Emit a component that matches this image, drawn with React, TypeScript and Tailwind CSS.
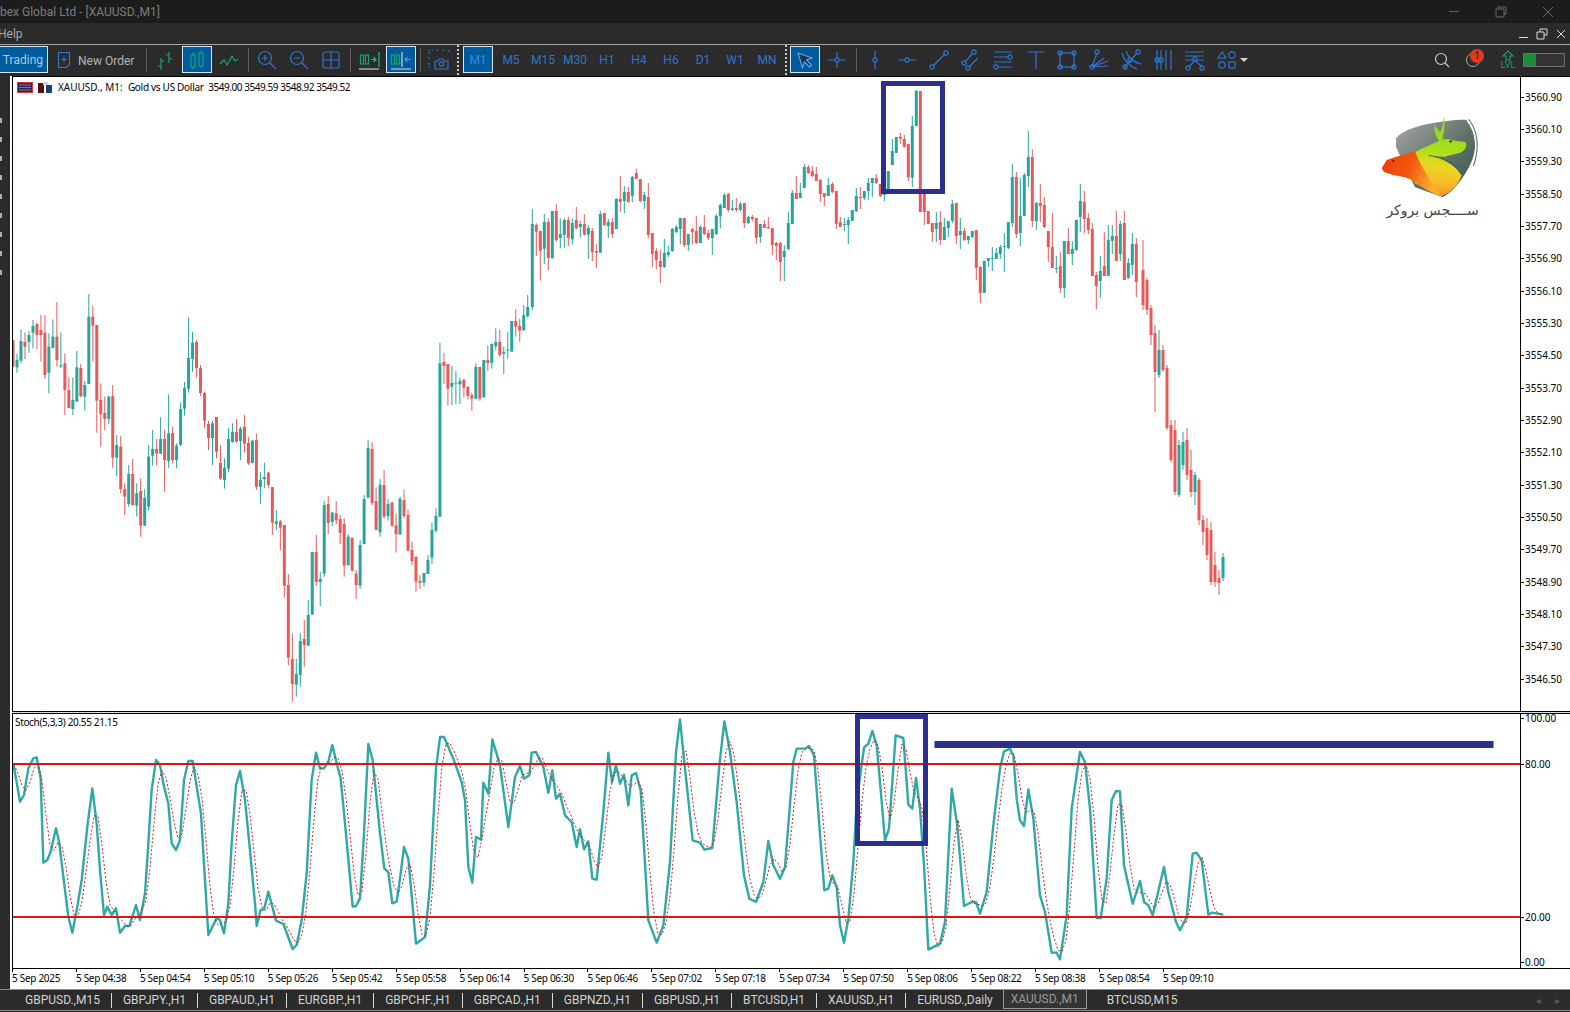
import type { ReactNode } from "react";

type C = [number, number, number, number, number];

// kind (1 green, 0 red), body top, body bottom, wick top, wick bottom
const LEFT: C[] = [
  [0,180,260,180,262],[1,240,262,222,278],[1,183,242,148,250],[0,186,200,157,237],[1,165,186,153,218],[1,138,158,120,205],[0,132,165,128,207],[0,150,165,105,245],
  [0,158,285,105,297],[1,200,278,160,340],[1,170,204,118,205],[0,170,240,66,260],[1,255,259,157,265],[0,250,330,220,405],[0,330,384,292,385],[1,360,387,292,405],
  [1,262,365,213,365],[0,264,349,252,352],[1,315,350,303,392],[1,110,312,42,312],[0,110,137,78,245],[0,135,362,135,458],[0,360,402,310,500],[0,399,417,350,450],
  [1,350,417,348,432],[0,348,533,315,563],[1,495,533,465,590],[0,500,627,468,640],[0,627,650,610,705],[1,582,672,555,680],[0,582,675,537,677],[1,640,677,610,710],
  [0,633,737,595,770],[1,654,737,628,737],[1,530,680,495,692],[1,507,527,450,557],[0,507,521,477,557],[1,477,521,412,522],[0,477,540,450,635],[1,460,543,343,563],
  [0,459,540,440,550],[1,497,540,490,565],[1,387,495,367,498],[1,324,386,306,407],[1,234,326,112,338],[1,188,237,156,275],[0,186,264,180,292],[0,264,339,255,347],
  [0,339,422,335,443],[0,432,474,423,510],[1,430,474,423,555],[0,411,515,411,535],[0,549,596,495,600],[1,564,600,535,626],[1,477,566,445,577],[1,456,486,430,488],
  [0,456,485,417,488],[1,446,483,440,540],[0,441,491,405,518],[0,489,550,470,555],[1,482,549,480,550],[0,480,620,460,630],[1,600,621,575,672],[1,591,597,548,625],
  [0,578,615,575,625],[0,621,728,621,765],[1,724,732,690,750],[0,724,743,720,810],[0,735,917,735,953],[0,915,1133,882,1155],[0,1137,1212,1060,1265],[1,1182,1214,1137,1250],
  [1,1083,1185,1060,1220],[0,1077,1095,1020,1160],[1,1005,1097,960,1097],[1,816,1004,816,1005],[0,816,906,765,918],[1,897,906,875,978],[1,675,881,662,890],[0,672,729,648,762],
  [1,698,726,695,738],[0,700,721,663,733],[0,717,759,705,793],[0,732,857,715,890],[1,770,855,762,857],[0,773,872,773,875],[0,881,915,870,957],[1,795,917,780,927],
  [1,657,792,645,792],[1,504,653,480,655],[0,507,669,487,675],[0,663,750,622,750],[1,615,757,597,770],[0,615,710,570,715],[1,672,708,657,722],[0,668,737,665,740],
  [0,736,762,700,818],[1,656,763,650,765],[0,660,708,628,715],[0,705,812,690,815],[0,810,843,785,855],[0,830,905,830,935],[0,903,909,885,927],[1,879,908,879,920],
  [1,840,882,825,882],[1,750,833,728,852],[1,708,752,685,758],[1,250,710,188,710],[0,246,258,218,312],[0,252,326,252,377],[1,309,320,258,375],[1,308,311,273,372],
  [1,303,313,293,372],[0,299,323,297,352],[0,321,348,318,358],[0,345,356,338,392],[1,261,356,250,358],[0,261,356,261,362],[1,240,352,240,352],[0,240,249,197,272],
  [1,192,249,190,266],[1,186,199,145,210],[0,186,225,150,230],[1,216,221,200,282],[1,208,211,155,236],[1,123,215,123,215],[0,123,140,87,170],[0,138,152,117,186],
  [1,105,151,75,152],[1,81,109,45,112],
];

const MIDDLE: C[] = [
  [1,222,471,177,480],[0,225,245,220,318],[0,243,302,243,392],[1,216,296,192,342],[0,216,324,205,360],[1,183,325,183,325],[0,183,270,162,275],[1,252,264,205,295],
  [1,210,255,205,293],[0,210,264,200,288],[1,219,268,205,283],[0,210,235,171,238],[1,222,231,213,263],[0,222,254,192,257],[1,234,254,225,327],[0,243,306,234,333],
  [0,303,308,283,354],[1,192,308,183,308],[0,189,225,189,228],[1,216,228,207,264],[0,216,252,204,264],[1,147,237,144,237],[0,147,156,78,186],[1,126,153,108,189],
  [0,126,156,111,158],[1,81,138,78,156],[0,69,87,57,87],[0,87,153,87,157],[1,135,153,126,177],[0,141,255,99,264],[0,249,312,249,352],[0,303,330,294,357],
  [0,333,351,300,399],[1,309,351,267,354],[1,306,315,288,321],[1,237,303,234,306],[1,231,246,225,249],[1,204,237,204,282],[0,204,285,204,291],[1,252,285,252,303],
  [0,237,246,234,282],[0,243,279,198,282],[1,231,279,225,279],[0,231,252,195,255],[0,249,264,240,270],[1,237,264,237,315],[1,198,252,192,255],[1,165,199,160,235],
  [1,135,174,129,174],[0,132,180,129,186],[1,175,180,150,183],[0,174,180,144,186],[1,162,180,156,183],[0,159,219,159,234],[1,201,219,198,222],[0,201,207,195,213],
  [0,204,264,204,282],[1,222,261,222,279],[0,222,234,210,234],[0,231,235,201,237],[0,234,285,234,315],[0,279,288,276,331],[0,279,336,276,393],[1,303,321,285,393],
  [1,219,297,186,300],[1,129,222,120,222],[0,129,147,78,147],[1,129,144,99,144],[1,51,114,42,114],[0,51,69,45,72],[0,63,78,48,81],[0,72,93,51,93],
  [0,90,132,87,156],[0,129,141,129,168],[1,105,138,84,138],[0,102,126,96,129],[0,123,222,123,237],[0,216,231,201,231],[1,222,225,204,243],[1,210,225,201,282],
  [1,180,213,180,213],[1,138,184,114,186],[0,141,144,111,177],[1,123,144,123,150],[1,99,123,84,150],[1,84,99,84,141],[0,84,99,72,102],[0,102,138,102,141],
  [1,118,135,115,153],
];

const RIGHT: C[] = [
  [1,303,358,303,358],[1,243,285,207,285],[1,201,249,201,249],[0,200,206,189,222],[0,207,231,195,232],[0,222,322,222,333],[1,168,323,138,351],[1,63,168,60,168],
  [0,63,426,63,426],[0,372,426,372,465],[0,423,462,423,462],[0,459,486,459,516],[1,459,477,426,516],[0,456,510,423,525],[1,471,510,444,510],[1,453,474,453,501],
  [1,402,453,390,459],[0,399,498,399,522],[1,483,495,444,537],[0,483,510,474,513],[1,498,510,498,522],[1,483,501,483,504],[0,480,594,480,630],[0,591,669,588,699],
  [1,573,669,573,669],[1,564,573,564,591],[1,564,567,531,603],[1,549,567,534,567],[1,531,552,525,567],[1,528,531,489,606],[1,456,534,456,537],[1,321,459,282,471],
  [0,321,492,306,504],[1,438,489,324,528],[1,315,438,309,438],[1,261,318,183,351],[0,261,453,237,471],[1,399,453,396,480],[0,399,408,342,456],[0,405,471,381,474],
  [0,483,531,483,576],[0,531,594,429,594],[1,594,597,558,609],[0,588,654,546,669],[1,513,654,513,684],[0,513,552,474,552],[1,537,552,513,585],[1,450,540,450,543],
  [1,393,441,342,486],[0,396,447,363,489],[0,444,480,429,492],[0,477,618,459,618],[0,615,648,606,717],[1,603,633,558,684],[0,588,618,486,618],[1,510,618,465,618],
  [1,498,513,465,552],[0,498,573,423,573],[1,462,552,453,573],[0,459,630,423,630],[1,579,624,564,627],[1,522,585,489,615],[0,522,636,504,681],
];

// last stretch, already in page pixels
const TAIL: C[] = [
  [0,270,305,240,310],[0,280,310,278,315],[0,308,335,305,345],[0,333,372,325,412],[1,350,375,330,378],[0,350,370,345,372],[0,368,428,365,430],[0,425,460,420,462],
  [0,430,492,420,495],[1,445,495,440,497],[1,442,465,432,470],[0,440,475,428,480],[0,470,492,450,497],[1,475,492,472,505],[0,480,520,478,525],[0,520,532,515,545],
  [0,528,555,518,560],[0,530,582,522,585],[0,565,582,552,587],[0,578,583,570,595],[1,557,578,553,581],
];

const candles = [
  ...LEFT.map((c, i) => ({ x: 13 + i * 3.99, y: (v: number) => 280 + v / 3, c })),
  ...MIDDLE.map((c, i) => ({ x: 532.3 + i * 4, y: (v: number) => 150 + v / 3, c })),
  ...RIGHT.map((c, i) => ({ x: 888.3 + i * 4, y: (v: number) => 70 + v / 3, c })),
  ...TAIL.map((c, i) => ({ x: 1143 + i * 4, y: (v: number) => v, c })),
];

const S1 = [40,190,60,305,72,285,85,205,100,175,110,172,122,235,130,488,142,480,152,455,168,385,178,430,190,530,205,650,217,698,232,620,245,540,262,380,277,265,290,370,300,510,312,645,322,620,335,645,348,625,360,698,375,678,388,678,408,615,420,660,435,580,445,430,455,270,468,180,480,195,492,260,505,310,515,430,528,450,540,420,552,240,565,183,578,183,590,260,603,340,610,460,625,705,650,655,660,660,672,700,685,610,695,430,708,255,720,213,735,300,748,430,765,610,770,678,782,630,792,628,805,575,828,662,850,672,878,747,890,735,905,660,920,520,935,240,948,158,960,205,972,205,985,185,997,135,1010,190,1022,235,1035,370,1058,620,1068,618,1080,595,1092,400,1105,132,1118,180,1140,400,1153,505,1165,517,1177,610,1190,605];
const S2 = [0,500,12,405,25,440,48,695,75,675,90,520,108,170,120,75,132,75,160,140,185,210,195,265,205,465,217,512,228,375,243,383,250,212,265,245,277,82,300,160,325,345,345,195,360,162,372,200,388,190,395,122,408,120,430,165,445,242,457,175,468,260,480,245,495,310,515,330,530,405,540,352,552,412,565,388,577,500,590,503,610,300,625,122,636,210,648,160,660,215,672,188,685,280,695,190,708,183,722,235,745,625,770,692,790,640,810,450,828,120,840,22,855,170,878,385,900,392,913,413,937,408,958,160,973,28,990,120,1010,270,1032,490,1048,560,1068,570,1090,510,1105,387,1120,460,1140,500,1155,465,1180,150,1190,110,1215,110,1227,102,1242,130,1258,340,1273,535,1285,530,1297,490,1310,525];
const S3 = [0,640,12,692,25,620,40,450,50,270,72,107,85,95,97,57,110,100,120,210,135,385,147,350,167,70,190,78,205,278,217,290,228,198,240,290,252,460,265,713,300,695,315,630,335,230,352,340,372,582,395,570,408,570,420,605,440,540,460,340,480,170,492,118,510,110,520,130,530,260,540,325,552,342,565,232,580,320,600,550,615,600,635,722,650,722,660,742,680,610,695,290,720,120,735,150,750,290,770,618,782,618,800,500,815,265,828,237,840,238,852,460,878,575,900,507,912,570,925,580,938,610,972,465,985,540,1008,630,1020,655,1040,615,1058,425,1070,422,1085,445,1105,608,1115,602,1150,608];

const pairs = (a: number[], x0: number, y0: number) => {
  const out: [number, number][] = [];
  for (let i = 0; i < a.length; i += 2) out.push([x0 + a[i] / 3, y0 + a[i + 1] / 3]);
  return out;
};

const stoch = [...pairs(S1, 0, 700), ...pairs(S2, 400, 712), ...pairs(S3, 840, 712)];

const stochAt = (x: number) => {
  if (x <= stoch[0][0]) return stoch[0][1];
  for (let i = 1; i < stoch.length; i++) {
    if (x <= stoch[i][0]) {
      const [x0, y0] = stoch[i - 1];
      const [x1, y1] = stoch[i];
      return y0 + ((y1 - y0) * (x - x0)) / (x1 - x0 || 1);
    }
  }
  return stoch[stoch.length - 1][1];
};

const mainPoints = stoch.map((p) => p.join(",")).join(" ");
const signalPoints = Array.from({ length: 303 }, (_, i) => {
  const x = 14 + i * 4;
  return `${x},${(stochAt(x) + stochAt(x - 4) + stochAt(x - 8)) / 3}`;
}).join(" ");

const PRICES = ["3560.90","3560.10","3559.30","3558.50","3557.70","3556.90","3556.10","3555.30","3554.50","3553.70","3552.90","3552.10","3551.30","3550.50","3549.70","3548.90","3548.10","3547.30","3546.50"];
const TIMES = ["5 Sep 2025","5 Sep 04:38","5 Sep 04:54","5 Sep 05:10","5 Sep 05:26","5 Sep 05:42","5 Sep 05:58","5 Sep 06:14","5 Sep 06:30","5 Sep 06:46","5 Sep 07:02","5 Sep 07:18","5 Sep 07:34","5 Sep 07:50","5 Sep 08:06","5 Sep 08:22","5 Sep 08:38","5 Sep 08:54","5 Sep 09:10"];
const TABS = ["GBPUSD.,M15","GBPJPY.,H1","GBPAUD.,H1","EURGBP.,H1","GBPCHF.,H1","GBPCAD.,H1","GBPNZD.,H1","GBPUSD.,H1","BTCUSD,H1","XAUUSD.,H1"];
const PERIODS = ["M5","M15","M30","H1","H4","H6","D1","W1","MN"];

const BLUE = "#2f74d0";
const GREEN = "#17a566";

const I = ({ children, c = BLUE, w = 22 }: { children: ReactNode; c?: string; w?: number }) => (
  <svg width={w} height={22} viewBox={`0 0 ${w} 22`} fill="none" stroke={c} strokeWidth="1.2">
    {children}
  </svg>
);

const Slot = ({ children, active }: { children: ReactNode; active?: boolean }) => (
  <div className="flex h-[29px] w-[32px] shrink-0 items-center justify-center">
    <div className={`flex h-[27px] w-[30px] items-center justify-center ${active ? "border border-[#d6e6f2] bg-[#005a9e]" : ""}`}>
      {children}
    </div>
  </div>
);

const Sep = () => (
  <div className="flex h-[29px] w-[6px] shrink-0 items-center justify-center">
    <div className="h-[24px] w-px bg-[#5f5f5f]" />
  </div>
);

const Dotted = () => <div className="mx-[2px] h-[30px] w-0 shrink-0 border-l-2 border-dotted border-[#c8c8c8]" />;

const Dot = ({ x, y }: { x: number; y: number }) => <circle cx={x} cy={y} r="2.1" />;

const Logo = () => (
  <svg width={130} height={100} viewBox="0 0 390 300">
    <defs>
      <linearGradient id="shield" x1="0" y1="0" x2="1" y2="1">
        <stop offset="0" stopColor="#a8a8a8" />
        <stop offset="0.55" stopColor="#5f7068" />
        <stop offset="1" stopColor="#33564c" />
      </linearGradient>
      <linearGradient id="bull" x1="0.5" y1="0" x2="0.4" y2="1">
        <stop offset="0" stopColor="#84dc18" />
        <stop offset="0.42" stopColor="#a8e01a" />
        <stop offset="0.62" stopColor="#e8d820" />
        <stop offset="0.85" stopColor="#fbb62a" />
        <stop offset="1" stopColor="#f8852a" />
      </linearGradient>
      <linearGradient id="wolf" x1="0" y1="0" x2="1" y2="0.3">
        <stop offset="0" stopColor="#ea3c08" />
        <stop offset="0.55" stopColor="#f25a10" />
        <stop offset="0.8" stopColor="#f98a22" />
        <stop offset="1" stopColor="#fbb02a" />
      </linearGradient>
    </defs>
    <path d="M108 115C125 95 160 80 215 70C260 62 300 58 322 60C345 90 352 130 340 170C325 215 290 265 250 292L165 262L130 190L108 140Z" fill="url(#shield)" />
    <path d="M322 60C352 100 355 150 335 200C315 245 280 280 247 295" fill="none" stroke="#fff" strokeWidth="6" />
    <path d="M326 58C356 95 358 150 340 198" fill="none" stroke="#3f5a55" strokeWidth="3" />
    <path d="M252 48C256 78 252 100 246 118L270 118C285 125 305 122 318 128C322 142 312 155 295 160C280 164 265 166 255 170L205 168C250 172 288 198 305 226C295 256 270 280 245 288L165 250L150 165C180 146 210 135 238 122C226 110 222 90 224 72C230 85 236 92 240 98C246 85 250 68 252 48Z" fill="url(#bull)" />
    <path d="M65 205L80 180L105 172L165 153C178 190 210 245 245 287C225 285 205 272 180 258C170 245 150 238 135 232L100 225L72 216Z" fill="url(#wolf)" />
    <path d="M205 166C245 170 285 190 303 222" fill="none" stroke="#3a5a40" strokeWidth="2.5" />
    <circle cx="272" cy="124" r="3.5" fill="#1c2c10" />
    <circle cx="100" cy="183" r="3" fill="#3a1000" />
  </svg>
);

const Toolbar = () => (
  <div className="flex h-[31px] items-start bg-[#2b2b2b] text-[12px] leading-[31px] text-[#b4b4b4]">
    <div className="mt-[1px] flex h-[27px] w-[48px] shrink-0 items-center justify-end border border-l-0 border-[#d6e6f2] bg-[#005a9e] pt-[1px] pr-[4px] leading-none text-[#a8cde6]">Trading</div>
    <div className="ml-[8px] flex h-[29px] w-[87px] shrink-0 items-center gap-[6px] leading-none">
      <svg width={16} height={18} viewBox="0 0 16 18" fill="none" stroke={BLUE} strokeWidth="1.2">
        <path d="M2.500 1.500h11v12l-3 3h-8zM8 5.500v6M5 8.500h6" />
      </svg>
      <span className="pt-[2px]">New Order</span>
    </div>
    <Sep />
    <Slot>
      <I c={GREEN}><path d="M7 9v12M7 12h3M7 17H4M15 3v11M15 6h-3M15 10h3" /></I>
    </Slot>
    <Slot active>
      <I c={GREEN}>
        <path d="M7 3v3M7 18v2M15 2v2M15 17v2" />
        <rect x="5" y="6" width="4" height="12" />
        <rect x="13" y="4" width="4" height="13" />
      </I>
    </Slot>
    <Slot>
      <I c={GREEN}><path d="M2 15l4-4 3 5 5-9 3 5 3-2" /></I>
    </Slot>
    <Sep />
    <Slot>
      <I>
        <circle cx="9" cy="9" r="6.500" />
        <path d="M14 14l6 6M9 6v6M6 9h6" />
      </I>
    </Slot>
    <Slot>
      <I>
        <circle cx="9" cy="9" r="6.500" />
        <path d="M14 14l6 6M6 9h6" />
      </I>
    </Slot>
    <Slot>
      <I>
        <rect x="3" y="3" width="16" height="16" rx="2" />
        <path d="M11 3v16M3 11h16" />
      </I>
    </Slot>
    <Sep />
    <Slot>
      <I c={GREEN}>
        <rect x="2.500" y="6" width="3" height="9" />
        <rect x="7.500" y="6" width="3" height="9" />
        <path d="M13 10.500h5M15.500 8l2.500 2.500-2.500 2.500M21 3v15" stroke="#1fb5a0" />
        <path d="M1 20h20" stroke="#c8c8c8" />
      </I>
    </Slot>
    <Slot active>
      <I c={GREEN}>
        <rect x="1.500" y="6" width="3" height="9" />
        <rect x="6.500" y="6" width="3" height="9" />
        <path d="M12 3v15" stroke="#d0d0d0" />
        <path d="M15 10.500h6M17.500 8L15 10.500l2.500 2.500" stroke="#4a98e8" />
        <path d="M1 20h20" stroke="#c8c8c8" />
      </I>
    </Slot>
    <Sep />
    <Slot>
      <I>
        <path d="M1 5V1h4M8 1h3M14 1h4M21 1v3M1 8v3M1 14v4h3" strokeDasharray="2 1.500" />
        <path d="M7 18v-6h3l1-2h4l1 2h4v8H7z" />
        <circle cx="13.500" cy="15" r="2.200" />
      </I>
    </Slot>
    <Dotted />
    <div className="mt-[1px] ml-[2px] flex h-[27px] w-[30px] shrink-0 items-center justify-center border border-[#d6e6f2] bg-[#005a9e] pt-[1px] leading-none text-[#3d8be0]">M1</div>
    <div className="w-[2px] shrink-0" />
    {PERIODS.map((p) => (
      <div key={p} className="w-[32px] shrink-0 text-center text-[#2f74d0]">{p}</div>
    ))}
    <Dotted />
    <Slot active>
      <svg width={20} height={20} viewBox="0 0 20 20" fill="#16324f" stroke="#6aa8e8" strokeWidth="1.100">
        <path d="M3 3l14 5-5.500 2 5 5-2 2-5-5-2 5.500z" />
      </svg>
    </Slot>
    <Slot>
      <I>
        <path d="M11 3v6M11 13v6M2 11h7M13 11h7" />
        <circle cx="11" cy="11" r="2.100" />
      </I>
    </Slot>
    <Sep />
    <Slot><I><path d="M11 2v7M11 13v7" /><Dot x={11} y={11} /></I></Slot>
    <Slot><I><path d="M2 11h7M13 11h7" /><Dot x={11} y={11} /></I></Slot>
    <Slot><I><path d="M5.500 16.500L16.500 5.500" /><Dot x={4} y={18} /><Dot x={18} y={4} /></I></Slot>
    <Slot><I><path d="M5 13l8-9M9 18l9-9" /><Dot x={4} y={14} /><Dot x={14} y={3} /><Dot x={8} y={19} /></I></Slot>
    <Slot><I><path d="M2 3h18M2 8h14M2 13h18M6 18h14" /><Dot x={18} y={8} /><Dot x={4} y={18} /></I></Slot>
    <Slot><I><path d="M4 3h16M12 3v17" /></I></Slot>
    <Slot>
      <I>
        <rect x="4" y="4" width="14" height="14" />
        <Dot x={4} y={4} /><Dot x={18} y={4} /><Dot x={4} y={18} /><Dot x={18} y={18} />
      </I>
    </Slot>
    <Slot><I><path d="M4 18L9 4M4 18l12-9M4 18l16-6M4 18l16-1" /><Dot x={4} y={18} /><Dot x={9} y={3} /></I></Slot>
    <Slot><I><path d="M2 4c2 7 7 13 15 16M6 2c2 7 7 11 15 13M4 19L17 4" /><Dot x={18} y={3} /><Dot x={5} y={18} /><Dot x={10} y={11} /></I></Slot>
    <Slot><I><path d="M5 1v20M9 1v20M14 1v20M19 1v20" /><Dot x={5} y={11} /><Dot x={9} y={11} /></I></Slot>
    <Slot><I><path d="M1 3h19M1 7h19M1 11h8M14 11h6M5 18l6-7 7 7" /><Dot x={4} y={19} /><Dot x={11} y={10} /><Dot x={18} y={19} /></I></Slot>
    <Slot>
      <I>
        <path d="M6 3l4 6H2z" />
        <circle cx="16" cy="6" r="3.200" />
        <circle cx="6" cy="16" r="3.200" />
        <rect x="13" y="13" width="6" height="6" />
      </I>
    </Slot>
    <div className="mt-[13px] -ml-[3px] h-0 w-0 shrink-0 border-x-[4px] border-t-[4px] border-x-transparent border-t-[#d0d0d0]" />
    <div className="flex-1" />
    <svg width={16} height={16} viewBox="0 0 16 16" fill="none" stroke="#c8c8c8" strokeWidth="1.200" className="mt-[7px]">
      <circle cx="7" cy="7" r="5.500" />
      <path d="M11 11l4 4" />
    </svg>
    <div className="relative mt-[8px] ml-[16px] h-[14px] w-[14px] rounded-full border border-[#a8a8a8]">
      <div className="absolute -top-[5px] left-[3px] flex h-[14px] w-[14px] items-center justify-center rounded-full bg-[#dd3a1e] text-[10px] leading-none text-[#3a1208]">1</div>
    </div>
    <div className="mt-[5px] ml-[21px] flex w-[14px] flex-col items-center text-[#17a566]">
      <svg width={12} height={11} viewBox="0 0 12 11" fill="none" stroke={GREEN} strokeWidth="1.200">
        <path d="M6 1L1 6h3v4h4V6h3z" />
      </svg>
      <span className="text-[9px] leading-[9px]">LVL</span>
    </div>
    <div className="mt-[8px] mr-[5px] ml-[8px] h-[14px] w-[42px] border border-[#6f6f6f] bg-[#333]">
      <div className="h-full w-[12px] bg-[#1b8a3a]" />
    </div>
  </div>
);

const PriceChart = () => (
  <div className="relative h-[634px] w-[1507px] shrink-0 overflow-hidden bg-white">
    <svg width={1507} height={634} viewBox="13 77 1507 634" className="block">
      {candles.map(({ x, y, c }, i) => {
        const color = c[0] ? "#26a69a" : "#e85a5a";
        return (
          <g key={i}>
            <rect x={x - 0.5} y={y(c[3])} width={1} height={y(c[4]) - y(c[3])} fill={color} />
            <rect x={x - 1.5} y={y(c[1])} width={3} height={Math.max(1, y(c[2]) - y(c[1]))} fill={color} />
          </g>
        );
      })}
      <rect x={883.500} y={83.500} width={59} height={108} fill="none" stroke="#2b2f8f" strokeWidth={5} />
    </svg>
    <div className="absolute top-[3px] left-[4px] flex items-center font-['Noto_Sans',sans-serif] text-[10px] text-black">
      <svg width={36} height={11} viewBox="0 0 36 11" className="mr-[5px]">
        <rect x="0.500" y="0.500" width="15" height="10" fill="#1a2c6b" stroke="#d23b3b" />
        <path d="M2 3h12M2 5.500h12M2 8h12" stroke="#e05050" />
        <rect x="21" y="1" width="6" height="10" fill="#5a0e14" />
        <rect x="29" y="3" width="6" height="8" fill="#12457a" />
        <rect x="26" y="0" width="5" height="3" fill="#d0d0d0" />
      </svg>
      <span className="whitespace-pre">XAUUSD., M1:  </span>
      <span className="tracking-[-0.3px] whitespace-pre">Gold vs US Dollar  </span>
      <span className="tracking-[-0.45px] whitespace-pre">3549.00 3549.59 3548.92 3549.52</span>
    </div>
    <div className="absolute top-[23px] left-[1347px] flex flex-col items-center">
      <Logo />
      <span className="mt-[1px] ml-[15px] font-['DejaVu_Sans',sans-serif] text-[14px] leading-[18px] text-[#444]">ســــجس بروکر</span>
    </div>
  </div>
);

const StochChart = () => (
  <div className="relative h-[254px] w-[1507px] shrink-0 overflow-hidden bg-white">
    <svg width={1507} height={254} viewBox="13 714 1507 254" className="block">
      <polyline points={mainPoints} fill="none" stroke="#2ea9a3" strokeWidth={2.4} strokeLinejoin="round" />
      <polyline points={signalPoints} fill="none" stroke="#cc1e1e" strokeWidth={1} strokeDasharray="2 2" />
      <rect x={13} y={763} width={1507} height={2} fill="#df1414" />
      <rect x={13} y={916} width={1507} height={2} fill="#df1414" />
      <rect x={857.500} y={716.500} width={68} height={127} fill="none" stroke="#2b2f8f" strokeWidth={5} />
      <rect x={934.500} y={741} width={559} height={7} fill="#2b2f8f" />
    </svg>
    <div className="absolute top-[1px] left-[2px] font-['Noto_Sans',sans-serif] text-[10px] leading-[14px] tracking-[-0.35px] text-black">Stoch(5,3,3) 20.55 21.15</div>
  </div>
);

const AxisLabel = ({ children, className }: { children: ReactNode; className?: string }) => (
  <div className={`flex items-center ${className ?? ""}`}>
    <div className="mr-[1px] h-px w-[3px] bg-black" />
    <span>{children}</span>
  </div>
);

export default function App() {
  return (
    <div className="flex h-[1012px] w-[1570px] flex-col overflow-hidden bg-[#1c1c1c] font-['Roboto',sans-serif]">
      <div className="flex h-[23px] shrink-0 items-center bg-[#1c1c1c] text-[12px] text-[#7d7d7d]">
        <span>bex Global Ltd - [XAUUSD.,M1]</span>
        <div className="flex-1" />
        <div className="h-px w-[10px] bg-[#666]" />
        <svg width={12} height={12} viewBox="0 0 12 12" fill="none" stroke="#666" className="ml-[36px]">
          <path d="M3 3V1h8v7H9M1 3h8v8H1z" />
        </svg>
        <svg width={12} height={12} viewBox="0 0 12 12" stroke="#666" className="mr-[16px] ml-[35px]">
          <path d="M1 1l10 10M11 1L1 11" />
        </svg>
      </div>
      <div className="flex h-[21px] shrink-0 items-center bg-[#2b2b2b] text-[12px] text-[#aaa]">
        <span className="-ml-[2px]">Help</span>
        <div className="flex-1" />
        <div className="mt-[8px] h-px w-[9px] bg-[#ddd]" />
        <svg width={12} height={12} viewBox="0 0 12 12" fill="none" stroke="#ddd" className="ml-[8px]">
          <path d="M4 4V1h7v6H8M1 4h7v7H1z" />
        </svg>
        <svg width={12} height={12} viewBox="0 0 12 12" stroke="#ddd" className="mr-[3px] ml-[7px]">
          <path d="M2 2l8 8M10 2l-8 8" />
        </svg>
      </div>
      <div className="h-px shrink-0 bg-[#a5a5a5]" />
      <Toolbar />
      <div className="flex h-[913px] shrink-0">
        <div className="flex w-[10px] shrink-0 flex-col gap-[14px] bg-[#2b2b2b] pt-[42px]">
          {Array.from({ length: 9 }, (_, i) => (
            <div key={i} className="h-[5px] w-[2px] bg-[#b8b092]" />
          ))}
        </div>
        <div className="w-[2px] shrink-0 bg-white" />
        <div className="flex w-[1558px] shrink-0 flex-col bg-white text-[10px] text-black">
          <div className="flex h-[636px] shrink-0 border-y border-black">
            <div className="border-x border-black">
              <PriceChart />
            </div>
            <div className="flex flex-1 flex-col pt-[4px] font-['Noto_Sans',sans-serif]">
              {PRICES.map((p) => (
                <AxisLabel key={p} className="h-[32.33px] shrink-0">{p}</AxisLabel>
              ))}
            </div>
          </div>
          <div className="h-px shrink-0 bg-[#ddd]" />
          <div className="flex h-[256px] shrink-0 border-y border-black">
            <div className="border-x border-black">
              <StochChart />
            </div>
            <div className="flex flex-1 flex-col font-['Noto_Sans',sans-serif]">
              <AxisLabel className="mt-[-3px] h-[14px]">100.00</AxisLabel>
              <AxisLabel className="mt-[32px] h-[14px]">80.00</AxisLabel>
              <AxisLabel className="mt-[139px] h-[14px]">20.00</AxisLabel>
              <AxisLabel className="mt-[31px] h-[14px]">0.00</AxisLabel>
            </div>
          </div>
          <div className="flex h-[20px] shrink-0 font-['Noto_Sans',sans-serif]">
            {TIMES.map((t) => (
              <div key={t} className="w-[63.95px] shrink-0">
                <div className="h-[3px] w-px bg-black" />
                <div className="-mt-[1px] leading-[14px] tracking-[-0.3px] whitespace-nowrap">{t}</div>
              </div>
            ))}
          </div>
        </div>
      </div>
      <div className="flex h-[22px] shrink-0 items-center border-y border-[#8c8c8c] bg-[#2b2b2b] pl-[14px] text-[12px] text-[#d4d4d4]">
        {TABS.map((t) => (
          <div key={t} className="flex h-[15px] items-center border-r border-[#d8d8d8] px-[11px]">{t}</div>
        ))}
        <div className="flex h-[15px] items-center pr-[10px] pl-[11px]">EURUSD.,Daily</div>
        <div className="flex h-[19px] w-[84px] items-center justify-center self-start border border-t-0 border-[#9a9a9a] bg-[#333] text-[#9a9a9a]">XAUUSD.,M1</div>
        <div className="pl-[20px]">BTCUSD,M15</div>
        <div className="flex-1" />
        <span className="mr-[14px] text-[10px] text-[#555]">◂</span>
        <span className="mr-[10px] text-[10px] text-[#555]">▸</span>
      </div>
    </div>
  );
}
